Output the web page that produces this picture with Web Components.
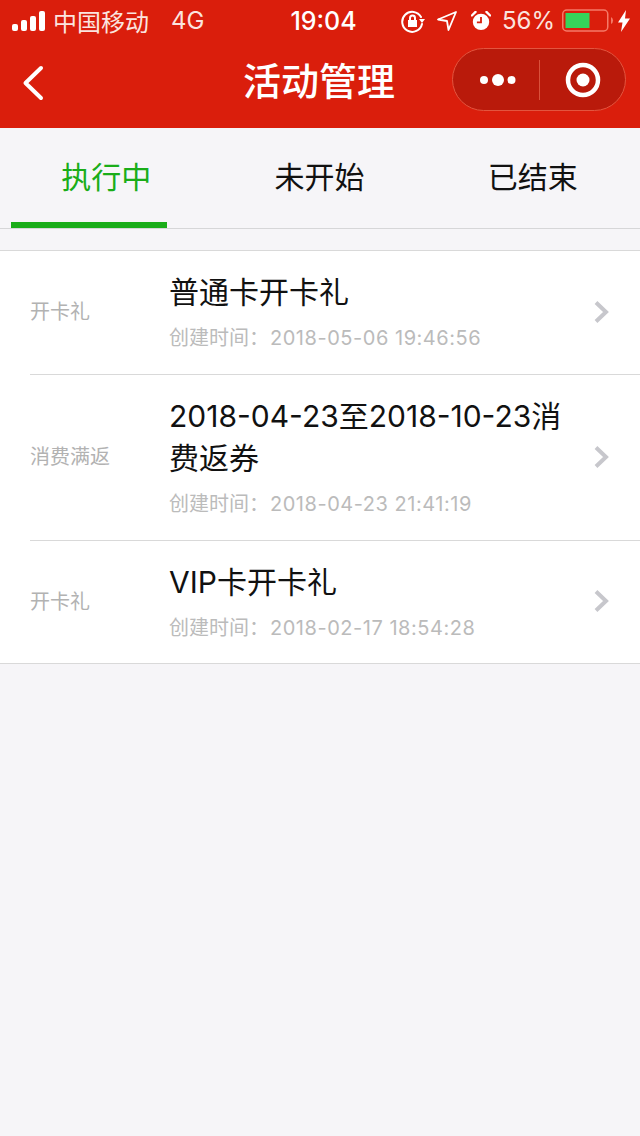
<!DOCTYPE html>
<html lang="zh">
<head>
<meta charset="utf-8">
<title>活动管理</title>
<style>
  html, body { margin: 0; padding: 0; background: #f6f5f8; }
  body { font-family: Inter, "Noto Sans CJK SC", sans-serif; }
</style>
</head>
<body>
<app-page>
  <status-bar></status-bar>
  <nav-bar>活动管理</nav-bar>
  <tab-bar>
    <tab-item active>执行中</tab-item>
    <tab-item>未开始</tab-item>
    <tab-item>已结束</tab-item>
  </tab-bar>
  <activity-list>
    <activity-row>
      <span slot="label">开卡礼</span>
      <span slot="title">普通卡开卡礼</span>
      <span slot="date">2018-05-06 19:46:56</span>
    </activity-row>
    <activity-row>
      <span slot="label">消费满返</span>
      <span slot="title">2018-04-23至2018-10-23消费返券</span>
      <span slot="date">2018-04-23 21:41:19</span>
    </activity-row>
    <activity-row last>
      <span slot="label">开卡礼</span>
      <span slot="title">VIP卡开卡礼</span>
      <span slot="date">2018-02-17 18:54:28</span>
    </activity-row>
  </activity-list>
</app-page>

<script>
//Page shell
class AppPage extends HTMLElement {
  constructor() {
    super();
    this.attachShadow({ mode: "open" }).innerHTML = `
    <style>
      :host {
        display: flex;
        flex-direction: column;
        width: 640px;
        height: 1136px;
        overflow: hidden;
        background: #f6f5f8;
      }
    </style>
    <slot></slot>`;
  }
}

//Phone status bar
class StatusBar extends HTMLElement {
  constructor() {
    super();
    this.attachShadow({ mode: "open" }).innerHTML = `
    <style>
      :host {
        display: grid;
        grid-template-columns: 1fr auto 1fr;
        align-items: center;
        height: 41px;
        padding: 0 10px 0 12px;
        background: #da1e0c;
        color: #fbe4df;
        font-size: 24px;
      }
      .left, .right { display: flex; align-items: center; }
      .right { justify-content: flex-end; }
      .carrier { margin-left: 7px; }
      .net { margin-left: 22px; }
      .time { font-size: 25px; font-weight: 500; color: #fff; padding-left: 5px; }
      .pct { margin: 0 7px 0 11px; }
      svg { display: block; flex: none; }
    </style>
    <div class="left">
      <svg width="34" height="20" viewBox="0 0 34 20" fill="#fff">
        <rect x="0" y="13" width="6" height="7" rx="2"/>
        <rect x="9" y="9" width="6" height="11" rx="2"/>
        <rect x="18" y="5" width="6" height="15" rx="2"/>
        <rect x="27" y="0" width="6" height="20" rx="2"/>
      </svg>
      <span class="carrier">中国移动</span>
      <span class="net">4G</span>
    </div>
    <div class="time">19:04</div>
    <div class="right">
      <svg width="24" height="24" viewBox="0 0 24 24" fill="none" stroke="#fff" stroke-width="2">
        <path d="M20 8A10 10 0 1 0 21 15" stroke-linecap="round"/>
        <path d="M18 10h6l-3 4z" fill="#fff" stroke="none"/>
        <rect x="7" y="11" width="9" height="7" fill="#fff" stroke="none"/>
        <path d="M9 11V9a2.500 2.500 0 0 1 5 0v2"/>
      </svg>
      <svg style="margin-left:12px" width="20" height="20" viewBox="0 0 20 20" fill="none" stroke="#fff" stroke-width="1.800" stroke-linejoin="round">
        <path d="M19 1 1 8.500 10 10 11.500 19z"/>
      </svg>
      <svg style="margin-left:14px" width="20" height="20" viewBox="0 0 22 22">
        <circle cx="11" cy="12" r="9" fill="#fff"/>
        <path d="M11 6.500V12.500H6.500" fill="none" stroke="#da1e0c" stroke-width="2"/>
        <path d="M1 5 5 1M21 5 17 1" stroke="#fff" stroke-width="2.500" stroke-linecap="round"/>
      </svg>
      <span class="pct">56%</span>
      <svg width="54" height="24" viewBox="0 0 54 24">
        <rect x="0.750" y="1" width="45" height="21" rx="4" fill="none" stroke="#f57a68" stroke-width="1.500"/>
        <rect x="3.500" y="4" width="24" height="15" fill="#35d45a"/>
        <path d="M49 8a4 4 0 0 1 0 7z" fill="#f57a68"/>
      </svg>
      <svg style="margin-left:2px" width="12" height="22" viewBox="0 0 12 22" fill="#fff">
        <path d="M8 0 0 12.500h4.500L3 22 12 8.500H7z"/>
      </svg>
    </div>`;
  }
}

//Red title bar with mini program capsule
class NavBar extends HTMLElement {
  constructor() {
    super();
    this.attachShadow({ mode: "open" }).innerHTML = `
    <style>
      :host {
        display: grid;
        grid-template-columns: 221px auto 1fr;
        align-items: center;
        height: 87px;
        padding: 0 14px 0 22px;
        background: #da1e0c;
        color: #fff;
        font-size: 38px;
        font-weight: 500;
      }
      .title { margin-top: -12px; }
      .back { display: block; margin-top: -3px; }
      .capsule {
        justify-self: end;
        display: flex;
        align-items: center;
        box-sizing: border-box;
        width: 174px;
        height: 63px;
        margin-top: -10px;
        border-radius: 32px;
        border: 1px solid #e3553f;
        background: #b91a0b;
      }
      .more, .target {
        display: flex;
        justify-content: center;
        align-items: center;
      }
      .more { width: 86px; box-sizing: border-box; padding-left: 3px; }
      .target { flex: 1; }
      .line { width: 1px; height: 40px; background: #d9513c; }
      svg { flex: none; }
    </style>
    <svg class="back" width="24" height="38" viewBox="0 0 24 38" fill="none" stroke="#fff" stroke-width="4" stroke-linecap="round" stroke-linejoin="round">
      <path d="M19 4 3.500 19 19 34"/>
    </svg>
    <div class="title"><slot></slot></div>
    <div class="capsule">
      <div class="more">
        <svg width="40" height="14" viewBox="0 0 40 14" fill="#fff">
          <circle cx="6" cy="7" r="4"/><circle cx="20" cy="7" r="6"/><circle cx="33.500" cy="7" r="4"/>
        </svg>
      </div>
      <div class="line"></div>
      <div class="target">
        <svg width="36" height="36" viewBox="0 0 36 36">
          <circle cx="18" cy="18" r="15" fill="none" stroke="#fff" stroke-width="4.500"/>
          <circle cx="18" cy="18" r="6.500" fill="#fff"/>
        </svg>
      </div>
    </div>`;
  }
}

//Tab strip
class TabBar extends HTMLElement {
  constructor() {
    super();
    this.attachShadow({ mode: "open" }).innerHTML = `
    <style>
      :host {
        display: grid;
        grid-template-columns: repeat(3, 1fr);
        height: 100px;
        border-bottom: 1px solid #d6d6d8;
        margin-bottom: 21px;
      }
    </style>
    <slot></slot>`;
  }
}

class TabItem extends HTMLElement {
  constructor() {
    super();
    this.attachShadow({ mode: "open" }).innerHTML = `
    <style>
      :host {
        display: flex;
        flex-direction: column;
        font-size: 30px;
        color: #111;
      }
      :host([active]) { color: #1aad19; }
      .text {
        flex: 1;
        display: flex;
        justify-content: center;
        align-items: center;
        padding: 0 1px 1px 0;
      }
      .bar { height: 6px; margin-left: 11px; width: 156px; }
      :host([active]) .bar { background: #1aad19; }
    </style>
    <div class="text"><slot></slot></div>
    <div class="bar"></div>`;
  }
}

//White list block
class ActivityList extends HTMLElement {
  constructor() {
    super();
    this.attachShadow({ mode: "open" }).innerHTML = `
    <style>
      :host {
        display: block;
        background: #fff;
        border-top: 1px solid #d9d9d9;
        border-bottom: 1px solid #d9d9d9;
      }
    </style>
    <slot></slot>`;
  }
}

class ActivityRow extends HTMLElement {
  constructor() {
    super();
    this.attachShadow({ mode: "open" }).innerHTML = `
    <style>
      :host { display: block; padding-left: 30px; }
      .wrap {
        display: grid;
        grid-template-columns: 139px 1fr 47px;
        align-items: center;
        border-bottom: 1px solid #d9d9d9;
      }
      :host([last]) .wrap { border-bottom: 0; }
      .label { margin-top: -4px; font-size: 20px; color: #b2b2b2; }
      .body { padding: 20px 0 22px; min-width: 0; }
      :host([last]) .body { padding-bottom: 21px; }
      .title {
        font-size: 30px;
        line-height: 42px;
        color: #111;
        width: 395px;
        word-break: break-all;
      }
      .time {
        margin-top: 11px;
        font-size: 20px;
        line-height: 28px;
        color: #bbb;
        white-space: nowrap;
      }
      .date { margin-left: 1px; letter-spacing: 0.53px; }
      svg { display: block; margin-top: -2px; }
    </style>
    <div class="wrap">
      <div class="label"><slot name="label"></slot></div>
      <div class="body">
        <div class="title"><slot name="title"></slot></div>
        <div class="time">创建时间：<span class="date"><slot name="date"></slot></span></div>
      </div>
      <svg width="18" height="24" viewBox="0 0 18 24" fill="none" stroke="#c7c7cc" stroke-width="4">
        <path d="M3 2.500 13 12 3 21.500"/>
      </svg>
    </div>`;
  }
}

customElements.define("app-page", AppPage);
customElements.define("status-bar", StatusBar);
customElements.define("nav-bar", NavBar);
customElements.define("tab-bar", TabBar);
customElements.define("tab-item", TabItem);
customElements.define("activity-list", ActivityList);
customElements.define("activity-row", ActivityRow);
</script>
</body>
</html>
